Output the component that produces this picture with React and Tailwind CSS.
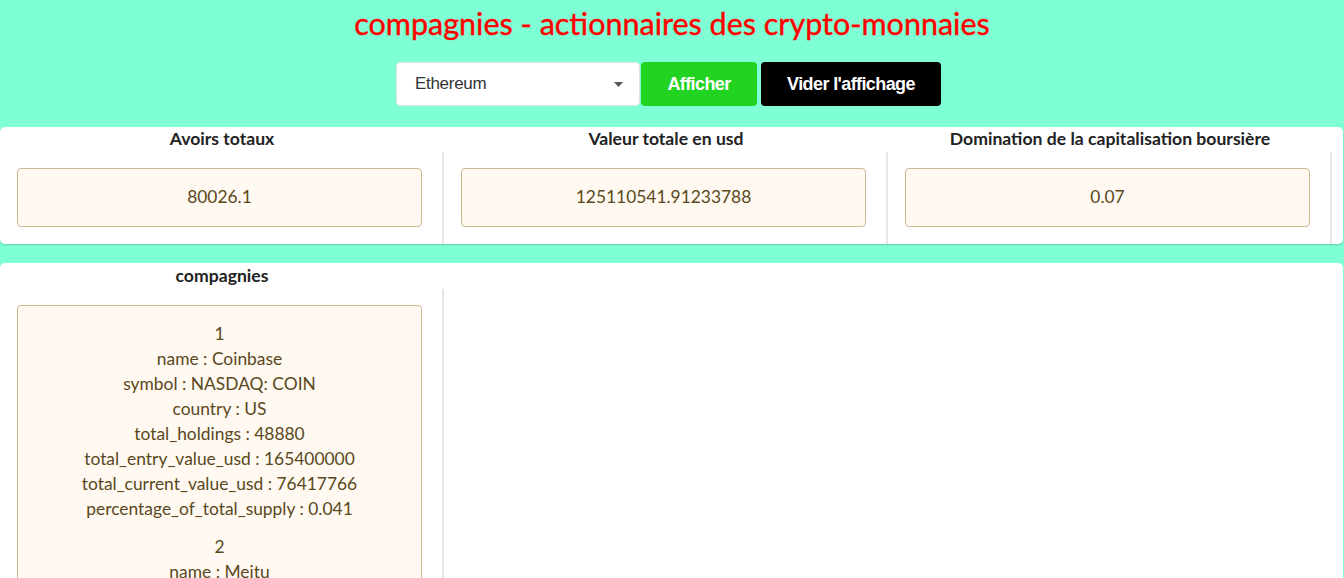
const companies = [
  {
    name: 'Coinbase',
    symbol: 'NASDAQ: COIN',
    country: 'US',
    total_holdings: 48880,
    total_entry_value_usd: 165400000,
    total_current_value_usd: 76417766,
    percentage_of_total_supply: 0.041
  },
  {
    name: 'Meitu',
    symbol: 'HKEX: 1357',
    country: 'CN',
    total_holdings: 31000,
    total_entry_value_usd: 50500000,
    total_current_value_usd: 48465175,
    percentage_of_total_supply: 0.026
  }
]

const stats = [
  { title: 'Avoirs totaux', value: '80026.1' },
  { title: 'Valeur totale en usd', value: '125110541.91233788' },
  { title: 'Domination de la capitalisation boursière', value: '0.07' }
]

function ValueBox({ children, className = '' }) {
  return (
    <div className={`rounded-[4px] border border-[#cdb894] bg-[#fff9f2] text-center text-[17.4px] text-[#5a4820] ${className}`}>
      {children}
    </div>
  )
}

export default function App() {
  return (
    <div className="min-h-screen bg-[#7fffd4] font-['Lato','Noto_Sans',sans-serif]">
      <div className="flex flex-col items-center pt-[3px] pb-[21px]">
        <h1 className="text-[30.5px] leading-[40px] text-[#ff0000] [-webkit-text-stroke:0.4px_#ff0000]">compagnies - actionnaires des crypto-monnaies</h1>
        <div className="mt-[19px] flex items-center pr-[7px] font-['Liberation_Sans',Arial,sans-serif]">
          <div className="flex h-[44px] w-[244px] items-center justify-between rounded-[4px] border border-[#e2e2e2] bg-white pl-[18px] pr-[16px] text-[17px] tracking-[-0.3px] text-[#333]">
            <span>Ethereum</span>
            <svg width="9" height="5" viewBox="0 0 9 5">
              <path d="M0 0h9L4.5 5z" fill="#555" />
            </svg>
          </div>
          <button className="ml-px h-[44px] w-[116px] rounded-[4px] bg-[#22d322] text-[18px] font-bold tracking-[-0.6px] text-white">
            Afficher
          </button>
          <button className="ml-[4px] h-[44px] w-[180px] rounded-[4px] bg-black text-[18px] font-bold tracking-[-0.6px] text-white">
            Vider l'affichage
          </button>
        </div>
      </div>

      <div className="mr-px flex rounded-[5px] bg-white shadow-[0_1px_2px_rgba(0,0,0,0.2)]">
        {stats.map(s => (
          <div key={s.title} className="w-[444px]">
            <div className="h-[25px] pt-[1px] text-center text-[17.6px] font-bold leading-[22px] text-[#222]">{s.title}</div>
            <div className="border-r-2 border-[#e6e6e6] pt-[16px] pb-[17px] pl-[17px] pr-[20px]">
              <ValueBox className="flex h-[59px] items-center justify-center">{s.value}</ValueBox>
            </div>
          </div>
        ))}
      </div>

      <div className="mt-[19px] mr-px rounded-[5px] bg-white">
        <div className="w-[444px]">
          <div className="h-[26px] pt-[2px] text-center text-[17.6px] font-bold leading-[22px] text-[#222]">compagnies</div>
          <div className="border-r-2 border-[#e6e6e6] pt-[16px] pb-[17px] pl-[17px] pr-[20px]">
            <ValueBox className="pt-[15px] pb-[3px] leading-[25px]">
              {companies.map((c, i) => (
                <div key={c.name} className="mb-[13px]">
                  <div>{i + 1}</div>
                  <div>name : {c.name}</div>
                  <div>symbol : {c.symbol}</div>
                  <div>country : {c.country}</div>
                  <div>total_holdings : {c.total_holdings}</div>
                  <div>total_entry_value_usd : {c.total_entry_value_usd}</div>
                  <div>total_current_value_usd : {c.total_current_value_usd}</div>
                  <div>percentage_of_total_supply : {c.percentage_of_total_supply}</div>
                </div>
              ))}
            </ValueBox>
          </div>
        </div>
      </div>
    </div>
  )
}
